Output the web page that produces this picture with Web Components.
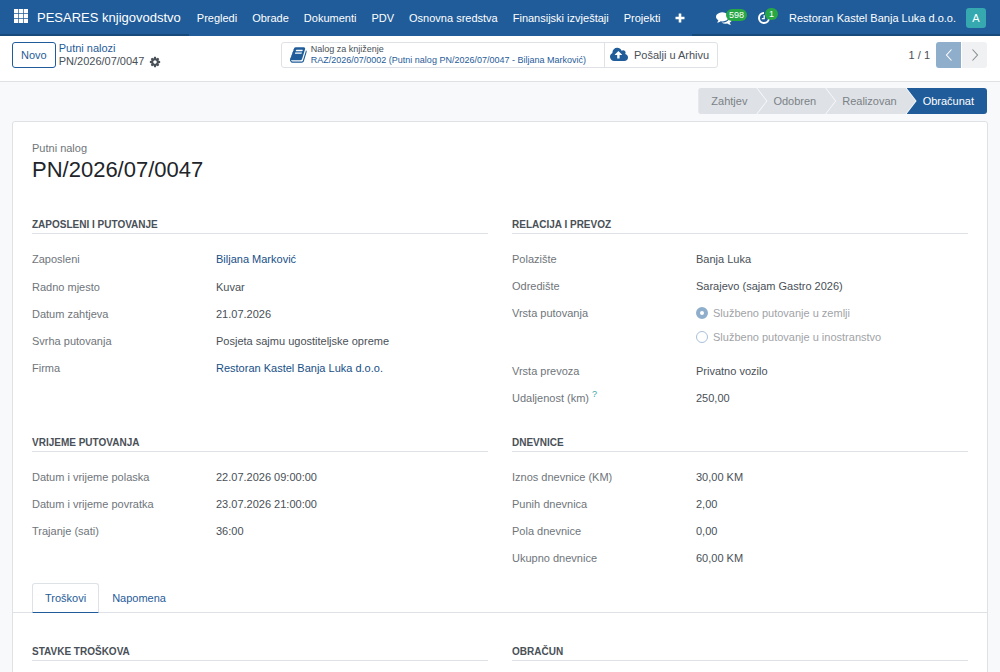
<!DOCTYPE html>
<html lang="bs">
<head>
<meta charset="utf-8">
<meta name="viewport" content="width=device-width, initial-scale=1">
<title>PN/2026/07/0047 - Putni nalozi</title>
<style>
  :root {
    --brand: #1f5c99;
    --brand-dark: #18497b;
    --link: #1f5c99;
    --link-strong: #174f87;
    --text: #495057;
    --muted: #6f757b;
    --line: #dee2e6;
    --page: #f8f9fa;
  }
  * { box-sizing: border-box; }
  body {
    margin: 0;
    background: var(--page);
    color: var(--text);
    font: 11px/16px "Liberation Sans", Arial, sans-serif;
  }
</style>
</head>
<body>
<travel-order-app></travel-order-app>

<script>
const BASE = `
  *, *::before, *::after { box-sizing: border-box; }
  button { font: inherit; color: inherit; background: none; border: 0; padding: 0; margin: 0; cursor: pointer; }
  a { color: var(--link); text-decoration: none; }
  h1, h2, p, dl, dd, ol, fieldset { margin: 0; padding: 0; border: 0; }
`;

function define(name, css, html) {
  const template = document.createElement('template');
  template.innerHTML = `<style>${BASE}${css}</style>${html}`;
  customElements.define(name, class extends HTMLElement {
    constructor() {
      super();
      this.attachShadow({ mode: 'open' }).append(template.content.cloneNode(true));
    }
  });
}

const ICONS = {
  apps: ['0 0 14 14', '<path d="M0 0h4.2v4.2H0zM4.9 0h4.2v4.2H4.9zM9.8 0H14v4.2H9.8zM0 4.9h4.2v4.2H0zM4.9 4.9h4.2v4.2H4.9zM9.8 4.9H14v4.2H9.8zM0 9.8h4.2V14H0zM4.9 9.8h4.2V14H4.9zM9.8 9.8H14V14H9.8z"/>'],
  plus: ['0 0 10 10', '<path d="M3.7.5h2.6v3.2h3.2v2.6H6.3v3.2H3.7V6.3H.5V3.7h3.2z"/>'],
  comments: ['0 0 1792 1792', '<path d="M1408 768q0 139-94 257t-256.5 186.5-353.5 68.5q-86 0-176-16-124 88-278 128-36 9-86 16h-3q-11 0-20.5-8t-11.5-21q-1-3-1-6.5t.5-6.5 2-6l2.5-5 3.5-5.5 4-5 4.5-5 4-4.5q5-6 23-25t26-29.5 22.5-29 25-38.5 20.5-44q-124-72-195-177t-71-224q0-139 94-257t256.5-186.5 353.5-68.5 353.5 68.5 256.5 186.5 94 257zm384 256q0 120-71 224.5t-195 176.5q10 24 20.5 44t25 38.5 22.5 29 26 29.5 23 25q1 1 4 4.5t4.5 5 4 5 3.5 5.5l2.5 5 2 6 .5 6.5-1 6.5q-3 14-13 22t-22 7q-50-7-86-16-154-40-278-128-90 16-176 16-271 0-472-132 58 4 88 4 161 0 309-45t264-129q125-92 192-212t67-254q0-77-23-152 129 71 204 178t75 230z"/>'],
  clock: ['0 0 14 14', '<path d="M7 2a5 5 0 1 0 5 5" fill="none" stroke="currentColor" stroke-width="2"/><path d="M7.2 4.2v3.5H4.8" fill="none" stroke="currentColor" stroke-width="1.3"/>'],
  cog: ['0 0 1792 1792', '<path d="M1152 896q0-106-75-181t-181-75-181 75-75 181 75 181 181 75 181-75 75-181zm512-109v222q0 12-8 23t-20 13l-185 28q-19 54-39 91 35 50 107 138 10 12 10 25t-9 23q-27 37-99 108t-94 71q-12 0-26-9l-138-108q-44 23-91 38-16 136-29 186-7 28-36 28h-222q-14 0-24.5-8.5t-11.5-21.5l-28-184q-49-16-90-37l-141 107q-10 9-25 9-14 0-25-11-126-114-165-168-7-10-7-23 0-12 8-23 15-21 51-66.5t54-70.5q-27-50-41-99l-183-27q-13-2-21-12.5t-8-23.5v-222q0-12 8-23t19-13l186-28q14-46 39-92-40-57-107-138-10-12-10-24 0-10 9-23 26-36 98.5-107.5t94.5-71.5q13 0 26 10l138 107q44-23 91-38 16-136 29-186 7-28 36-28h222q14 0 24.5 8.5t11.5 21.5l28 184q49 16 90 37l142-107q9-9 24-9 13 0 25 10 129 119 165 170 7 8 7 22 0 12-8 23-15 21-51 66.5t-54 70.5q26 50 41 98l183 28q13 2 21 12.5t8 23.5z"/>'],
  book: ['0 0 1792 1792', '<path d="M1639 478q40 57 18 129l-275 906q-19 64-76.5 107.5t-122.5 43.5h-923q-77 0-148.5-53.5t-99.5-131.5q-24-67-2-127 0-4 3-27t4-37q1-8-3-21.5t-3-19.5q2-11 8-21t16.5-23.5 16.5-23.5q23-38 45-91.5t30-91.5q3-10 .5-30t-.5-28q3-11 17-28t17-23q21-36 42-92t25-90q1-9-2.5-32t.5-28q4-13 22-30.5t22-22.5q19-26 42.5-84.5t27.5-96.5q1-8-3-25.5t-2-26.5q2-8 9-18t18-23 17-21q8-12 16.5-30.5t15-35 16-36 19.5-32 26.5-23.5 36-11.5 47.5 5.5l-1 3q38-9 51-9h761q74 0 114 56t18 130l-274 906q-36 119-71.5 153.5t-128.5 34.5h-869q-27 0-38 15-11 16-1 43 24 70 144 70h923q29 0 56-15.5t35-41.5l300-987q7-22 5-57 38 15 59 43zm-1064 2q-4 13 2 22.5t20 9.5h608q13 0 25.5-9.5t16.5-22.5l21-64q4-13-2-22.5t-20-9.5h-608q-13 0-25.5 9.5t-16.5 22.5zm-83 256q-4 13 2 22.5t20 9.5h608q13 0 25.5-9.5t16.5-22.5l21-64q4-13-2-22.5t-20-9.5h-608q-13 0-25.5 9.5t-16.5 22.5z"/>'],
  upload: ['0 128 1920 1536', '<path d="M1280 864q0-14-9-23l-352-352q-9-9-23-9t-23 9l-351 351q-10 12-10 24 0 14 9 23t23 9h224v352q0 13 9.5 22.5t22.5 9.5h192q13 0 22.5-9.5t9.5-22.5v-352h224q13 0 22.5-9.5t9.5-22.5zm640 288q0 159-112.5 271.5t-271.5 112.5h-1088q-185 0-316.5-131.5t-131.5-316.5q0-130 70-240t188-165q-2-30-2-43 0-212 150-362t362-150q156 0 285.5 87t188.5 231q71-62 166-62 106 0 181 75t75 181q0 76-41 138 130 31 213.5 135.5t83.5 238.5z"/>'],
  left: ['0 0 12 14', '<path d="M8.5 1.5L3.5 7l5 5.5" fill="none" stroke="currentColor" stroke-width="1.1"/>'],
  right: ['0 0 12 14', '<path d="M3.5 1.5l5 5.5-5 5.5" fill="none" stroke="currentColor" stroke-width="1.1"/>'],
};

customElements.define('ui-icon', class extends HTMLElement {
  constructor() {
    super();
    this.attachShadow({ mode: 'open' });
  }
  connectedCallback() {
    const [box, shape] = ICONS[this.getAttribute('name')];
    this.shadowRoot.innerHTML = `
      <style>
        :host { display: inline-block; flex: none; width: 14px; height: 14px; }
        svg { display: block; width: 100%; height: 100%; fill: currentColor; }
      </style>
      <svg viewBox="${box}" aria-hidden="true">${shape}</svg>`;
  }
});

define('app-navbar', `
  :host { display: flex; height: 36px; background: var(--brand); color: #fff; box-shadow: inset 0 -2px var(--brand-dark); }
  .brand { display: flex; align-items: center; gap: 9px; padding: 0 8px 0 14px; font-size: 13px; white-space: nowrap; }
  a { color: inherit; }
  nav { display: flex; background: var(--brand); }
  nav a, nav button { display: flex; align-items: center; padding: 0 7px 0 8px; white-space: nowrap; }
  nav ui-icon { width: 10px; height: 10px; }
  .tray { display: flex; align-items: center; margin-left: auto; padding-right: 14px; }
  .tray button { position: relative; display: flex; align-items: center; }
  .chat { margin-right: 25px; }
  .chat ui-icon { width: 16px; height: 16px; }
  .clock { margin-right: 18px; }
  .badge { position: absolute; left: 10px; bottom: 5px; padding: 0 3px; border-radius: 6px; background: #28a745; font-size: 9px; line-height: 12px; }
  .clock .badge { left: 8px; padding: 0 4px; }
  .tray .company { margin-right: 10px; white-space: nowrap; }
  .tray .avatar { justify-content: center; width: 20px; height: 20px; border-radius: 3px; background: #35a8b0; }
`, `
  <div class="brand">
    <button aria-label="Aplikacije"><ui-icon name="apps"></ui-icon></button>
    <a href="#">PESARES knjigovodstvo</a>
  </div>
  <nav>
    <a href="#">Pregledi</a><a href="#">Obrade</a><a href="#">Dokumenti</a><a href="#">PDV</a>
    <a href="#">Osnovna sredstva</a><a href="#">Finansijski izvještaji</a><a href="#">Projekti</a>
    <button aria-label="Više"><ui-icon name="plus"></ui-icon></button>
  </nav>
  <div class="tray">
    <button class="chat" aria-label="Poruke"><ui-icon name="comments"></ui-icon><span class="badge">598</span></button>
    <button class="clock" aria-label="Aktivnosti"><ui-icon name="clock"></ui-icon><span class="badge">1</span></button>
    <button class="company">Restoran Kastel Banja Luka d.o.o.</button>
    <button class="avatar" aria-label="Korisnik">A</button>
  </div>
`);

define('control-panel', `
  :host { display: grid; grid-template-columns: 1fr auto 1fr; align-items: start; padding: 6px 13px 13px 12px; background: #fff; border-bottom: 1px solid var(--line); }
  .left { display: flex; gap: 3px; }
  .new { height: 26px; padding: 0 8px; border: 1px solid var(--brand); border-radius: 3px; color: var(--brand); }
  .crumbs { line-height: 13px; white-space: nowrap; }
  .crumbs a { display: block; }
  .current { display: flex; align-items: center; gap: 5px; }
  .current button { display: flex; }
  .current ui-icon { width: 12px; height: 12px; }
  .stats { display: flex; height: 26px; border: 1px solid var(--line); border-radius: 3px; }
  .stats button { display: flex; align-items: center; padding: 0 8px; white-space: nowrap; text-align: left; }
  .stats button:first-child { padding-right: 18px; }
  .stats button + button { border-left: 1px solid var(--line); padding-left: 5px; }
  .stats ui-icon { color: var(--brand); width: 18px; height: 18px; margin-right: 3px; }
  .stats ui-icon[name="upload"] { height: 16px; margin-right: 6px; }
  .two { font-size: 9px; line-height: 11px; }
  .two span { display: block; }
  .two .ref { color: var(--link); }
  .pager { display: flex; align-items: center; justify-content: flex-end; }
  .pager .count { margin-right: 6px; }
  .pager button { display: flex; align-items: center; justify-content: center; width: 25px; height: 26px; background: #f0f1f2; color: #868c92; border-radius: 0 3px 3px 0; }
  .pager .prev { background: #8faecc; color: #fff; border-radius: 3px 0 0 3px; margin-right: 1px; }
`, `
  <div class="left">
    <button class="new">Novo</button>
    <div class="crumbs">
      <a href="#">Putni nalozi</a>
      <div class="current"><span>PN/2026/07/0047</span><button aria-label="Radnje"><ui-icon name="cog"></ui-icon></button></div>
    </div>
  </div>
  <div class="stats">
    <button><ui-icon name="book"></ui-icon><span class="two"><span>Nalog za knjiženje</span><span class="ref">RAZ/2026/07/0002 (Putni nalog PN/2026/07/0047 - Biljana Marković)</span></span></button>
    <button><ui-icon name="upload"></ui-icon><span>Pošalji u Arhivu</span></button>
  </div>
  <div class="pager">
    <span class="count">1 / 1</span>
    <button class="prev" aria-label="Prethodni"><ui-icon name="left"></ui-icon></button>
    <button aria-label="Sljedeći"><ui-icon name="right"></ui-icon></button>
  </div>
`);

define('status-bar', `
  :host { display: flex; justify-content: flex-end; padding: 6px 13px 7px; }
  ol { display: flex; list-style: none; border-radius: 3px; overflow: hidden; background: #f8f9fa; }
  li { padding: 5px 19px 5px 16px; margin-left: -9px; line-height: 16px; background: #dee1e5; color: #7b8187;
       clip-path: polygon(0 0, calc(100% - 10px) 0, 100% 50%, calc(100% - 10px) 100%, 0 100%, 10px 50%); }
  li:first-child { padding-left: 13px; margin-left: 0; clip-path: polygon(0 0, calc(100% - 10px) 0, 100% 50%, calc(100% - 10px) 100%, 0 100%); }
  li:last-child { padding-right: 13px; background: var(--brand); color: #fff; clip-path: polygon(0 0, 100% 0, 100% 100%, 0 100%, 10px 50%); }
`, `
  <ol><li>Zahtjev</li><li>Odobren</li><li>Realizovan</li><li aria-current="step">Obračunat</li></ol>
`);

define('field-group', `
  :host { display: block; min-width: 0; }
  h2 { font-size: 10px; line-height: 14px; font-weight: 700; padding-bottom: 1px; border-bottom: 1px solid var(--line); text-transform: uppercase; }
  .fields { display: grid; gap: 5px; padding-top: 14px; }
`, `<h2><slot name="title"></slot></h2><div class="fields"><slot></slot></div>`);

define('form-field', `
  :host { display: grid; grid-template-columns: 184px 1fr; line-height: 22px; min-height: 22px; }
  :host([relation]) { line-height: 23px; }
  .label { color: var(--muted); }
`, `<div class="label"><slot name="label"></slot></div><div class="value"><slot></slot></div>`);

define('trip-type', `
  :host { display: block; }
  fieldset { display: grid; gap: 2px; padding-bottom: 7px; min-width: 0; }
  label { display: flex; align-items: center; gap: 5px; color: #9fa3a7; }
  input { appearance: none; width: 12px; height: 12px; margin: 0; border: 1px solid #a9c0da; border-radius: 50%; background: #fff; }
  input:checked { border: 4px solid #8faecc; }
`, `
  <fieldset aria-label="Vrsta putovanja">
    <label><input type="radio" name="trip" checked disabled>Službeno putovanje u zemlji</label>
    <label><input type="radio" name="trip" disabled>Službeno putovanje u inostranstvo</label>
  </fieldset>
`);

define('tab-strip', `
  :host { display: flex; padding: 0 19px; margin: 0 -19px; border-bottom: 1px solid var(--line); }
  button { height: 30px; padding: 0 12px; margin-bottom: -1px; border: 1px solid transparent; color: var(--link); }
  button[aria-selected="true"] { border-color: var(--line); border-bottom-color: var(--brand); border-radius: 3px 3px 0 0; background: #fff; }
`, `<button role="tab" aria-selected="true">Troškovi</button><button role="tab" aria-selected="false">Napomena</button>`);

define('form-sheet', `
  :host { display: block; margin: 0 12px 12px; padding: 18px 19px; background: #fff; border: 1px solid var(--line); border-radius: 3px; }
  .kind { color: var(--muted); }
  h1 { color: #212529; font-size: 22px; line-height: 28px; font-weight: 400; margin-bottom: 34px; }
  .groups { display: grid; grid-template-columns: 1fr 1fr; column-gap: 24px; margin-bottom: 27px; }
  .groups.times { margin-bottom: 14px; }
  form-field a { color: var(--link-strong); }
  tab-strip { margin-bottom: 32px; }
  sup { color: #35a8b0; font-size: 9px; line-height: 9px; }
`, `
  <div class="kind">Putni nalog</div>
  <h1>PN/2026/07/0047</h1>
  <div class="groups">
    <field-group><span slot="title">Zaposleni i putovanje</span>
      <form-field relation><span slot="label">Zaposleni</span><a href="#">Biljana Marković</a></form-field>
      <form-field><span slot="label">Radno mjesto</span>Kuvar</form-field>
      <form-field><span slot="label">Datum zahtjeva</span>21.07.2026</form-field>
      <form-field><span slot="label">Svrha putovanja</span>Posjeta sajmu ugostiteljske opreme</form-field>
      <form-field relation><span slot="label">Firma</span><a href="#">Restoran Kastel Banja Luka d.o.o.</a></form-field>
    </field-group>
    <field-group><span slot="title">Relacija i prevoz</span>
      <form-field><span slot="label">Polazište</span>Banja Luka</form-field>
      <form-field><span slot="label">Odredište</span>Sarajevo (sajam Gastro 2026)</form-field>
      <form-field><span slot="label">Vrsta putovanja</span><trip-type></trip-type></form-field>
      <form-field><span slot="label">Vrsta prevoza</span>Privatno vozilo</form-field>
      <form-field><span slot="label">Udaljenost (km) <sup>?</sup></span>250,00</form-field>
    </field-group>
  </div>
  <div class="groups times">
    <field-group><span slot="title">Vrijeme putovanja</span>
      <form-field><span slot="label">Datum i vrijeme polaska</span>22.07.2026 09:00:00</form-field>
      <form-field><span slot="label">Datum i vrijeme povratka</span>23.07.2026 21:00:00</form-field>
      <form-field><span slot="label">Trajanje (sati)</span>36:00</form-field>
    </field-group>
    <field-group><span slot="title">Dnevnice</span>
      <form-field><span slot="label">Iznos dnevnice (KM)</span>30,00 KM</form-field>
      <form-field><span slot="label">Punih dnevnica</span>2,00</form-field>
      <form-field><span slot="label">Pola dnevnice</span>0,00</form-field>
      <form-field><span slot="label">Ukupno dnevnice</span>60,00 KM</form-field>
    </field-group>
  </div>
  <tab-strip role="tablist"></tab-strip>
  <div class="groups">
    <field-group><span slot="title">Stavke troškova</span></field-group>
    <field-group><span slot="title">Obračun</span></field-group>
  </div>
`);

define('travel-order-app', `
  :host { display: block; }
`, `
  <app-navbar></app-navbar>
  <control-panel></control-panel>
  <main>
    <status-bar></status-bar>
    <form-sheet></form-sheet>
  </main>
`);
</script>
</body>
</html>
